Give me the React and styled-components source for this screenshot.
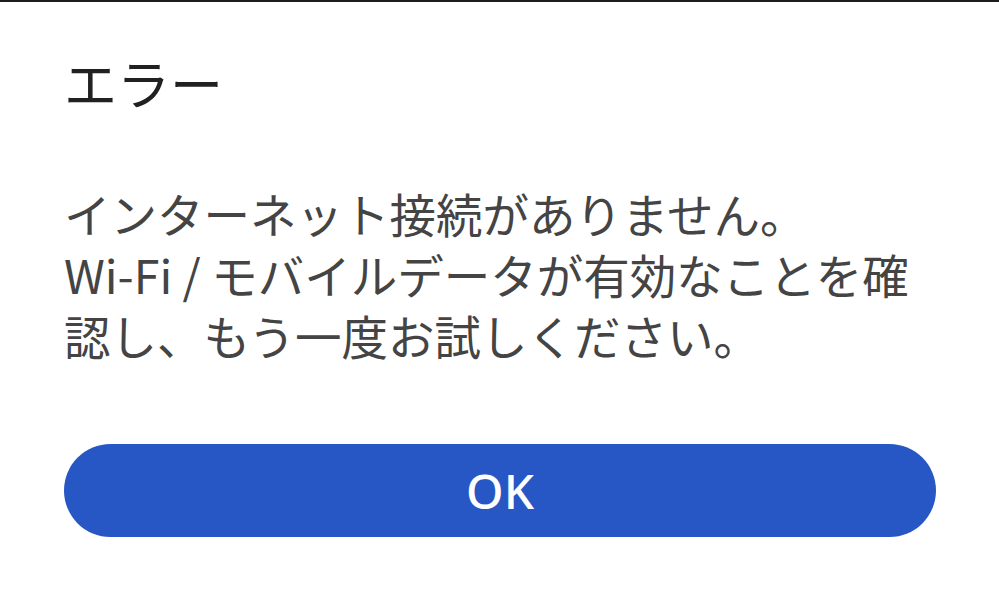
import styled, { createGlobalStyle } from "styled-components";

const Global = createGlobalStyle`
  html, body {
    margin: 0;
    padding: 0;
    background: #ffffff;
  }
  body {
    font-family: "Noto Sans CJK JP", "Noto Sans", sans-serif;
  }
`;

const Screen = styled.div`
  width: 999px;
  height: 594px;
  box-sizing: border-box;
  border-top: 2px solid #1c1c1c;
  background: #fff;
  overflow: hidden;
`;

const Dialog = styled.div`
  display: flex;
  flex-direction: column;
  padding: 42px 63px 0 64px;
`;

const Title = styled.h1`
  margin: 0;
  font-size: 53px;
  line-height: 76px;
  font-weight: 400;
  color: #212121;
`;

const Message = styled.p`
  margin: 62px 0 0 0;
  font-size: 46.5px;
  line-height: 61px;
  font-weight: 400;
  color: #444;
  white-space: nowrap;
`;

const Actions = styled.div`
  display: flex;
  margin-top: 79px;
`;

const Button = styled.button`
  flex: 1;
  height: 93px;
  border: none;
  border-radius: 47px;
  background: #2756c5;
  color: #fff;
  font-family: "Noto Sans", "Noto Sans CJK JP", sans-serif;
  font-size: 48px;
  font-weight: 500;
  cursor: pointer;
`;

export default function App() {
  return (
    <>
      <Global />
      <Screen>
        <Dialog>
          <Title>エラー</Title>
          <Message>
            インターネット接続がありません。
            <br />
            Wi-Fi / モバイルデータが有効なことを確
            <br />
            認し、もう一度お試しください。
          </Message>
          <Actions>
            <Button>OK</Button>
          </Actions>
        </Dialog>
      </Screen>
    </>
  );
}
